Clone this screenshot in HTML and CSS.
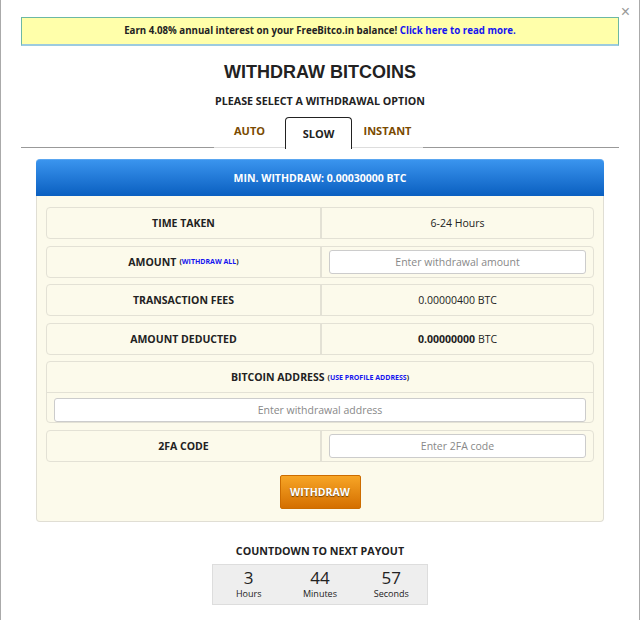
FILE: index.html
```html
<!DOCTYPE html>
<html lang="en">

<head>
    <meta charset="UTF-8">
    <meta name="viewport" content="width=device-width, initial-scale=1.0">
    <title>Withdraw Bitcoins</title>
    <link rel="stylesheet" href="styles.css">
</head>

<body>
    <div class="modal">
        <span class="close">&times;</span>

        <div class="banner">
            Earn 4.08% annual interest on your FreeBitco.in balance! <a href="#">Click here to read more.</a>
        </div>

        <h1>WITHDRAW BITCOINS</h1>
        <h2>PLEASE SELECT A WITHDRAWAL OPTION</h2>

        <div class="tabs">
            <div class="tab-fill left"></div>
            <div class="tab">AUTO</div>
            <div class="tab active">SLOW</div>
            <div class="tab">INSTANT</div>
            <div class="tab-fill"></div>
        </div>

        <div class="panel">
            <div class="panel-head">MIN. WITHDRAW: 0.00030000 BTC</div>
            <div class="panel-body">
                <div class="row">
                    <div class="cell label">TIME TAKEN</div>
                    <div class="cell value">6-24 Hours</div>
                </div>

                <div class="row">
                    <div class="cell label"><span>AMOUNT</span><span class="small">(<a href="#">WITHDRAW ALL</a>)</span></div>
                    <div class="cell value field">
                        <input type="text" placeholder="Enter withdrawal amount">
                    </div>
                </div>

                <div class="row">
                    <div class="cell label">TRANSACTION FEES</div>
                    <div class="cell value">0.00000400 BTC</div>
                </div>

                <div class="row">
                    <div class="cell label">AMOUNT DEDUCTED</div>
                    <div class="cell value"><b>0.00000000</b><span>BTC</span></div>
                </div>

                <div class="row stack">
                    <div class="cell label top"><span>BITCOIN ADDRESS</span><span class="small">(<a href="#">USE PROFILE ADDRESS</a>)</span></div>
                    <div class="field wide">
                        <input type="text" placeholder="Enter withdrawal address">
                    </div>
                </div>

                <div class="row">
                    <div class="cell label">2FA CODE</div>
                    <div class="cell value field">
                        <input type="text" placeholder="Enter 2FA code">
                    </div>
                </div>

                <button type="button">WITHDRAW</button>
            </div>
        </div>

        <h3>COUNTDOWN TO NEXT PAYOUT</h3>
        <div class="countdown">
            <div class="unit"><span class="num">3</span><span class="unit-label">Hours</span></div>
            <div class="unit"><span class="num">44</span><span class="unit-label">Minutes</span></div>
            <div class="unit"><span class="num">57</span><span class="unit-label">Seconds</span></div>
        </div>
    </div>
</body>

</html>
```

FILE: styles.css
```css
body {
    font-family: "Open Sans", Arial, sans-serif;
    color: #222;
    background-color: #fff;
    margin: 0;
    padding: 0;
}

.modal {
    position: relative;
    box-sizing: border-box;
    height: 620px;
    padding: 17px 20px 0;
    border-left: 1px solid #aaa;
    border-right: 1px solid #aaa;
}

.close {
    position: absolute;
    top: 3px;
    right: 9px;
    font-family: Arial, sans-serif;
    font-size: 16px;
    color: #999;
}

.banner {
    height: 26px;
    line-height: 26px;
    background-color: #ffffaa;
    border: 1px solid #6cb8a4;
    border-bottom: 2px solid #9ccbe0;
    text-align: center;
    font-size: 9.7px;
    font-weight: bold;
}

.banner a {
    color: #1414f0;
    text-decoration: none;
}

h1 {
    margin: 14px 0 0;
    font-family: "Liberation Sans", Arial, sans-serif;
    font-size: 18px;
    line-height: 24px;
    text-align: center;
    color: #222;
}

h2 {
    margin: 9px 0 0;
    font-size: 10.7px;
    line-height: 16px;
    text-align: center;
}

.tabs {
    display: flex;
    margin-top: 8px;
    height: 31px;
}

.tab-fill {
    flex: 1;
    border-bottom: 1px solid #999;
}

.tab-fill.left {
    flex: none;
    width: 193px;
}

.tab {
    width: 71px;
    box-sizing: border-box;
    border-bottom: 1px solid #ddd;
    text-align: center;
    line-height: 28px;
    font-size: 11px;
    font-weight: bold;
    color: #7a4a00;
}

.tab.active {
    width: 67px;
    height: 32px;
    border: 1px solid #222;
    border-bottom: none;
    border-radius: 4px 4px 0 0;
    line-height: 32px;
    color: #222;
}

.panel {
    margin: 11px 15px 0;
}

.panel-head {
    height: 37px;
    line-height: 37px;
    border-radius: 4px 4px 0 0;
    background: linear-gradient(#3a94ee, #0a5fc0);
    border-top: 1px solid #5aa6f0;
    box-sizing: border-box;
    color: #fff;
    text-align: center;
    font-size: 10.5px;
    font-weight: bold;
}

.panel-body {
    display: flex;
    flex-direction: column;
    gap: 6.5px;
    padding: 11px 9px 12px;
    background-color: #fcfaeb;
    border: 1px solid #e0ded4;
    border-top: none;
    border-radius: 0 0 4px 4px;
}

.row {
    display: grid;
    grid-template-columns: minmax(0, 1fr) minmax(0, 1fr);
    height: 32px;
    box-sizing: border-box;
    border: 1px solid #e3e1d5;
    border-radius: 4px;
}

.row.stack {
    display: flex;
    flex-direction: column;
    height: 62px;
}

.cell {
    display: flex;
    align-items: center;
    justify-content: center;
    gap: 3px;
    font-size: 10.5px;
}

.label {
    font-weight: bold;
}

.label.top {
    flex: none;
    height: 30px;
    border-bottom: 1px solid #e3e1d5;
}

.value {
    border-left: 2px solid #e3e1d5;
}

.small {
    font-size: 7px;
}

.small a {
    color: #1414f0;
    text-decoration: none;
}

.field {
    padding: 0 7px;
}

.field.wide {
    padding: 4px 7px 0;
}

input[type="text"] {
    width: 100%;
    height: 24px;
    box-sizing: border-box;
    border: 1px solid #ccc;
    border-radius: 3px;
    background-color: #fff;
    text-align: center;
    font-family: "Open Sans", Arial, sans-serif;
    font-size: 10.5px;
}

input::placeholder {
    color: #888;
}

button {
    align-self: center;
    width: 81px;
    height: 34px;
    margin-top: 7px;
    background: linear-gradient(#f7a526, #d46f00);
    border: 1px solid #cc6c00;
    border-radius: 2px;
    color: #fff;
    font-family: "Open Sans", Arial, sans-serif;
    font-size: 10.5px;
    font-weight: bold;
    text-shadow: 0 1px 1px rgba(0, 0, 0, 0.5);
    cursor: pointer;
}

h3 {
    margin: 21px 0 0;
    font-size: 10.7px;
    line-height: 16px;
    text-align: center;
}

.countdown {
    display: flex;
    width: 216px;
    height: 41px;
    box-sizing: border-box;
    margin: 5px auto 0;
    background-color: #eee;
    border: 1px solid #ddd;
}

.unit {
    flex: 1;
    display: flex;
    flex-direction: column;
    align-items: center;
    padding-top: 3px;
}

.num {
    font-size: 17px;
    line-height: 20px;
}

.unit-label {
    font-size: 9px;
    line-height: 12px;
}
```
